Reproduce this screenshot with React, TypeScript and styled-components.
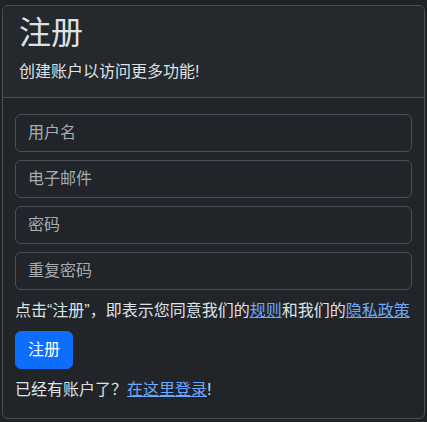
import styled, { createGlobalStyle } from 'styled-components';

const Global = createGlobalStyle`
html, body {
    margin: 0;
    padding: 0;
    background: #1f2327;
}
body {
    font-family: "Liberation Sans", "Noto Sans CJK SC", sans-serif;
    color: #dee2e6;
    font-size: 16px;
    line-height: 1.5;
}
`

const Page = styled.div`
padding: 5px 2px 4px 2px;
`

const Card = styled.section`
background: #212529;
border: 1px solid #4a4f54;
border-radius: 6px;
overflow: hidden;
`

const Header = styled.header`
padding: 8px 16px;
background: #25292d;
border-bottom: 1px solid #4a4f54;

h1 {
    margin: 0 0 8px;
    font-size: 32px;
    font-weight: 400;
    line-height: 1.2;
}

p {
    margin: 0 0 5px;
}
`

const Body = styled.form`
padding: 16px 12px 16px;
display: flex;
flex-direction: column;
`

const Field = styled.input`
box-sizing: border-box;
height: 38px;
margin-bottom: 8px;
padding: 6px 12px;
font: inherit;
color: #dee2e6;
background: #212529;
border: 1px solid #495057;
border-radius: 6px;
outline: none;

&::placeholder {
    color: rgba(222, 226, 230, 0.72);
}
`

const Note = styled.p<{ $gap?: number; $last?: boolean }>`
margin: ${p => p.$gap ?? 0}px 0 ${p => (p.$last ? 0 : 8)}px;
white-space: nowrap;

a {
    color: #6ea8fe;
    text-decoration: underline;
}
`

const Button = styled.button`
align-self: flex-start;
height: 38px;
padding: 6px 12px;
margin: 0 0 9px;
font: inherit;
color: #fff;
background: #0d6efd;
border: 1px solid #0d6efd;
border-radius: 6px;
`

function App() {
    return (
        <Page>
            <Global />
            <Card>
                <Header>
                    <h1>注册</h1>
                    <p>创建账户以访问更多功能!</p>
                </Header>
                <Body onSubmit={e => e.preventDefault()}>
                    <Field type="text" placeholder="用户名" />
                    <Field type="email" placeholder="电子邮件" />
                    <Field type="password" placeholder="密码" />
                    <Field type="password" placeholder="重复密码" />
                    <Note $gap={1}>点击“注册”，即表示您同意我们的<a href="#">规则</a>和我们的<a href="#">隐私政策</a></Note>
                    <Button type="submit">注册</Button>
                    <Note $last>已经有账户了？<a href="#">在这里登录</a>!</Note>
                </Body>
            </Card>
        </Page>
    );
}

export default App;
